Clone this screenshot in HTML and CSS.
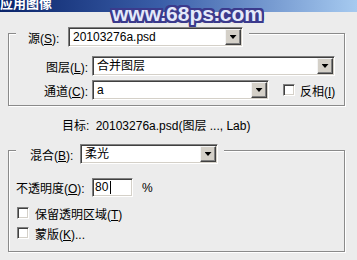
FILE: index.html
```html
<!DOCTYPE html>
<html>
<head>
<meta charset="utf-8">
<link rel="stylesheet" href="styles.css">
</head>
<body>
<div class="titlebar"><span class="title">应用图像</span></div>
<div class="watermark">www.68ps.com</div>
<div class="content">
  <div class="group g1">
    <div class="gh">
      <span class="lbl src">源(<u>S</u>):</span>
      <div class="select w-src"><span class="val">20103276a.psd</span><span class="arrow"></span></div>
    </div>
    <div class="row r-layer">
      <span class="lbl rl">图层(<u>L</u>):</span>
      <div class="select w-layer"><span class="val">合并图层</span><span class="arrow"></span></div>
    </div>
    <div class="row r-chan">
      <span class="lbl rl">通道(<u>C</u>):</span>
      <div class="select w-chan"><span class="val">a</span><span class="arrow"></span></div>
      <span class="check c-inv"></span><span class="ctext">反相(<u>I</u>)</span>
    </div>
  </div>
  <div class="target">目标: <span class="tfile">20103276a.psd(图层 ..., Lab)</span></div>
  <div class="group g2">
    <div class="gh">
      <span class="lbl blend">混合(<u>B</u>):</span>
      <div class="select w-blend"><span class="val">柔光</span><span class="arrow"></span></div>
    </div>
    <div class="row r-op">
      <span class="lbl oplbl">不透明度(<u>O</u>):</span>
      <div class="input"><span class="ival">80</span><span class="caret"></span></div>
      <span class="pct">%</span>
    </div>
    <div class="cbrow cb1">
      <span class="check"></span><span class="ctext2">保留透明区域(<u>T</u>)</span>
    </div>
    <div class="cbrow cb2">
      <span class="check"></span><span class="ctext2">蒙版(<u>K</u>)...</span>
    </div>
  </div>
</div>
</body>
</html>
```

FILE: styles.css
```css
html, body {
  margin: 0;
  padding: 0;
}
body {
  width: 357px;
  height: 260px;
  overflow: hidden;
  position: relative;
  background: #ececec;
  font-family: "Liberation Sans", "Noto Sans CJK SC", sans-serif;
  font-size: 12px;
  color: #000;
}
u {
  text-decoration: underline;
  text-underline-offset: 1px;
}
.titlebar {
  height: 12px;
  overflow: hidden;
  background: linear-gradient(to right, #0a246a 0%, #3a5ea8 45%, #a6caf0 100%);
}
.title {
  display: block;
  margin-top: -3px;
  line-height: 12px;
  color: #fff;
  font-weight: bold;
  font-size: 13px;
  font-family: "Noto Sans CJK SC", sans-serif;
}
.watermark {
  position: absolute;
  left: 112px;
  top: 1px;
  font-family: "Liberation Sans", sans-serif;
  font-weight: bold;
  font-size: 21px;
  line-height: 26px;
  color: #e4e9fa;
  text-shadow:
    -2px 0 0 #3b3a8c, 2px 0 0 #3b3a8c, 0 -2px 0 #3b3a8c, 0 2px 0 #3b3a8c,
    -2px -2px 0 #3b3a8c, 2px 2px 0 #3b3a8c, -2px 2px 0 #3b3a8c, 2px -2px 0 #3b3a8c,
    -1px -2px 0 #3b3a8c, 1px 2px 0 #3b3a8c, -2px 1px 0 #3b3a8c, 2px -1px 0 #3b3a8c;
}
.content {
  padding: 21px 12px 0 8px;
}
.group {
  box-sizing: border-box;
  border: 1px solid #8a8a8a;
  box-shadow: inset 1px 1px 0 #fff, 1px 1px 0 #fff;
}
.g1 {
  height: 73px;
}
.g2 {
  margin-top: 16px;
  height: 102px;
}
.gh {
  display: flex;
  align-items: center;
  width: max-content;
  height: 20px;
  margin: -7px 0 0 7px;
  background: #ececec;
}
.g1 .gh {
  padding: 0 6px 0 12px;
}
.g2 .gh {
  padding: 0 6px 0 14px;
}
.lbl {
  white-space: nowrap;
}
.src {
  width: 40px;
}
.blend {
  width: 50px;
}
.select {
  box-sizing: border-box;
  display: flex;
  align-items: center;
  height: 20px;
  padding: 1px;
  background: #fff;
  border: 1px solid;
  border-color: #808080 #fff #fff #808080;
  box-shadow: inset 1px 1px 0 #404040, inset -1px -1px 0 #d4d0c8;
}
.val {
  flex: 1;
  padding-left: 3px;
  white-space: nowrap;
  line-height: 16px;
}
.arrow {
  box-sizing: border-box;
  width: 16px;
  height: 16px;
  display: flex;
  align-items: center;
  justify-content: center;
  background: #d4d0c8;
  border: 1px solid;
  border-color: #f4f4f4 #404040 #404040 #f4f4f4;
  box-shadow: inset -1px -1px 0 #808080;
}
.arrow::after {
  content: "";
  width: 7px;
  height: 4px;
  background: #000;
  clip-path: polygon(0 0, 100% 0, 50% 100%);
}
.w-src { width: 175px; }
.w-layer { width: 243px; }
.w-chan { width: 177px; }
.w-blend { width: 138px; }
.row {
  display: flex;
  align-items: center;
  height: 20px;
}
.r-layer { margin-top: 9px; }
.r-chan { margin-top: 4px; }
.rl {
  width: 79px;
  margin-right: 4px;
  text-align: right;
}
.check {
  box-sizing: border-box;
  width: 12px;
  height: 12px;
  background: #fff;
  border: 1px solid;
  border-color: #808080 #fff #fff #808080;
  box-shadow: inset 1px 1px 0 #404040, inset -1px -1px 0 #d4d0c8;
  flex: none;
}
.c-inv { margin-left: 14px; }
.ctext { margin-left: 5px; white-space: nowrap; }
.target {
  margin-top: 12px;
  line-height: 16px;
  padding-left: 54px;
  white-space: nowrap;
}
.tfile { margin-left: 3px; }
.r-op {
  margin-top: 14px;
  height: 19px;
  padding-left: 7px;
}
.oplbl { width: 76px; }
.input {
  box-sizing: border-box;
  display: flex;
  align-items: center;
  width: 41px;
  height: 19px;
  padding: 0 0 0 2px;
  background: #fff;
  border: 1px solid;
  border-color: #808080 #fff #fff #808080;
  box-shadow: inset 1px 1px 0 #404040, inset -1px -1px 0 #d4d0c8;
}
.ival { line-height: 15px; }
.caret {
  width: 1px;
  height: 13px;
  margin-left: 2px;
  background: #000;
}
.pct { margin-left: 9px; }
.cbrow {
  display: flex;
  align-items: center;
  height: 16px;
  padding-left: 8px;
}
.cb1 { margin-top: 8px; }
.cb2 { margin-top: 4px; }
.ctext2 { margin-left: 6px; white-space: nowrap; }
```
